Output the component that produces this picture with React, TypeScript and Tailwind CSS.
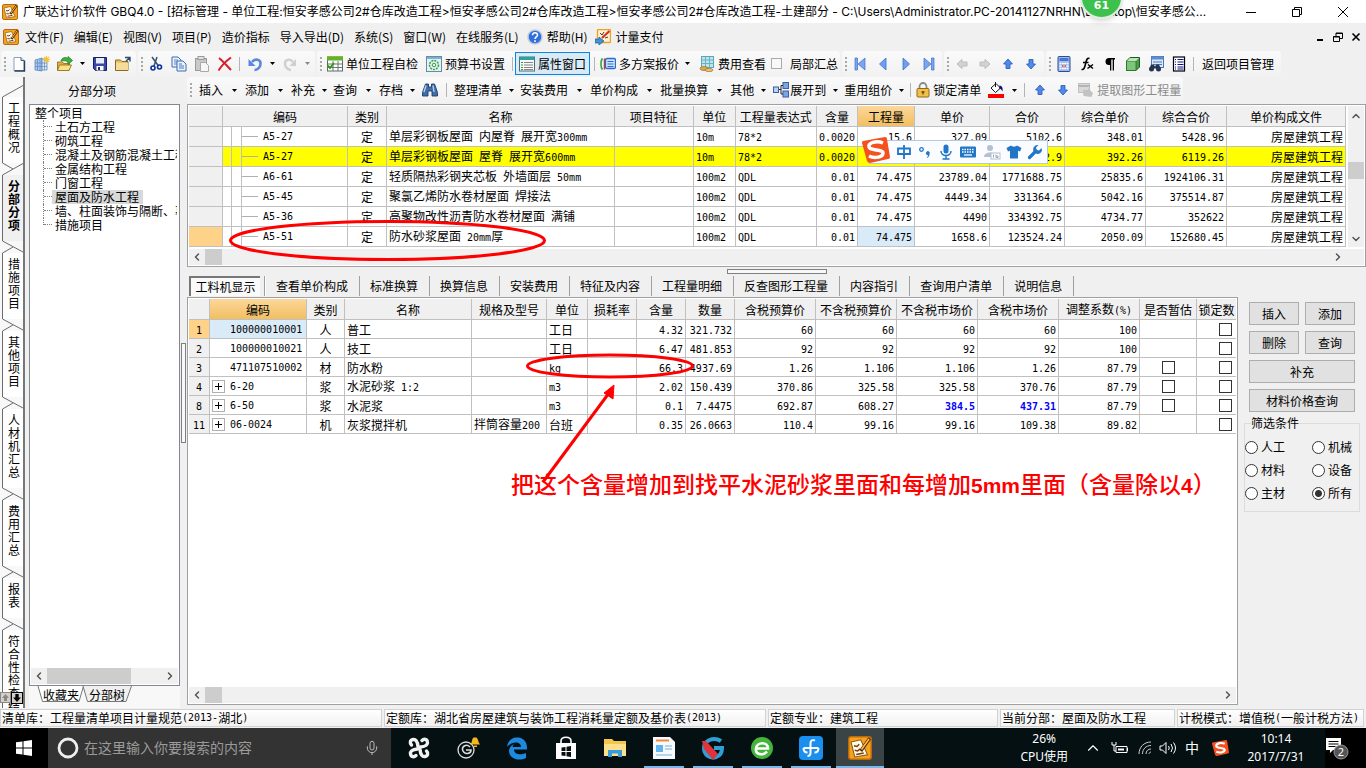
import type { ReactNode } from 'react'
import { Mic, ChevronUp, ChevronDown, ChevronLeft, ChevronRight } from 'lucide-react'

const app = (
  <>
    <rect x="0.5" y="0.5" width="15" height="15" rx="1.5" fill="#f6a21a" stroke="#b96a0c" />
    <path d="M2 4 8.500 2.500 13 12.500 4.500 14Z" fill="#fffbe8" stroke="#8a5a1a" strokeWidth="0.7" />
    <path d="M4 6.500l2 .5 1.500-1.500M4.500 9.500l2 .5 1.500-1.500M5.500 12.300l5-1" stroke="#7a3c10" strokeWidth="1" fill="none" />
    <path d="M14.500 1.500 8.500 10" stroke="#5b2a0a" strokeWidth="2.200" />
    <path d="M14 2 9 9" stroke="#ffc14a" strokeWidth="1" />
  </>
)

const icons: Record<string, ReactNode> = {
  app,
  file: (
    <>
      <path d="M3 1.500h7l3 3v10H3Z" fill="#fff" stroke="#8ba0b8" />
      <path d="M10 1.500v3h3" fill="#cfe0f2" stroke="#44607f" />
      <path d="M13.500 4.500v10.500H3.500" stroke="#24405f" fill="none" strokeWidth="1.400" />
    </>
  ),
  newGrid: (
    <>
      <path d="M1 4 8 2v13l-7-1Z" fill="#a9c8ee" stroke="#5b86bf" strokeWidth="0.8" />
      <path d="M8 3h5v11H8Z" fill="#dbe9f9" stroke="#5b86bf" strokeWidth="0.8" />
      <path d="M3.500 4v10M6 3v12M10.500 3v11M1 7h12M1 10.500h12" stroke="#5b86bf" strokeWidth="0.7" />
      <path d="M12.500 0v7M9 3.500h7M10 1l5 5M15 1l-5 5" stroke="#f5c22e" strokeWidth="1.100" />
    </>
  ),
  open: (
    <>
      <path d="M0.500 6h5l1 1.500h6V14h-12Z" fill="#e3b13c" stroke="#8e6412" strokeWidth="0.8" />
      <path d="M2.500 9h12l-2.500 5.500H0.500Z" fill="#fbe08c" stroke="#8e6412" strokeWidth="0.8" />
      <path d="M4 5c1-4 5-4 7-2.500V0.500l4.500 4-4.500 4V6C9 4.500 6.500 4.500 4 5Z" fill="#3cb43c" stroke="#1b741b" strokeWidth="0.7" />
    </>
  ),
  save: (
    <>
      <path d="M1.500 1.500h13v13h-11l-2-2Z" fill="#3648a8" stroke="#16205c" />
      <rect x="4" y="2" width="8" height="5.500" fill="#e6ecf8" />
      <rect x="4.500" y="10" width="7" height="4.500" fill="#fff" />
      <rect x="6" y="11" width="2" height="3" fill="#222b66" />
    </>
  ),
  folder: (
    <>
      <path d="M0.500 4h5l1.500 1.500h6v9H0.500Z" fill="#e9c56a" stroke="#8b6a24" />
      <path d="M1 7h12v7H1Z" fill="#f5dc98" />
      <path d="M10 1.500h5v4M15 1.500 11 5" stroke="#2c4a74" strokeWidth="1.400" fill="none" />
    </>
  ),
  cut: (
    <>
      <path d="M4 1l6.500 9M9 1 6 10" stroke="#39536e" strokeWidth="1.500" />
      <circle cx="5" cy="12" r="2" fill="none" stroke="#0c2f9c" strokeWidth="1.600" />
      <circle cx="11.500" cy="11" r="2" fill="none" stroke="#0c2f9c" strokeWidth="1.600" />
    </>
  ),
  copy: (
    <>
      <path d="M1 1h6l3 3v7H1Z" fill="#e8f1fc" stroke="#3c6cb4" />
      <path d="M3 4h4M3 6h5M3 8h5" stroke="#3c6cb4" strokeWidth="0.8" />
      <path d="M6 5h6l3 3v7H6Z" fill="#e8f1fc" stroke="#3c6cb4" />
      <path d="M8 8h3M8 10h5M8 12h5" stroke="#3c6cb4" strokeWidth="0.9" />
    </>
  ),
  paste: (
    <>
      <rect x="1.500" y="2.500" width="11" height="12" fill="#c9c9c9" stroke="#9a9a9a" />
      <rect x="4" y="0.500" width="6" height="3" fill="#e2e2e2" stroke="#9a9a9a" />
      <path d="M6.500 6.500h5l3 3v6h-8Z" fill="#f6f6f6" stroke="#a8a8a8" />
    </>
  ),
  del: <path d="M2 2c4 3 8 8 12 12M14 1.500C9 5 5 9 1.500 14.500" stroke="#d3202b" strokeWidth="2" fill="none" />,
  undo: (
    <>
      <path d="M5 6C8 2 14 3.500 13.500 8c0 4-4 6-6 6" stroke="#5a88de" strokeWidth="2.600" fill="none" />
      <path d="M1.500 3v7h7Z" fill="#5a88de" />
    </>
  ),
  redo: (
    <>
      <path d="M11 6C8 2 2.500 3.500 3 8c0 4 4 6 6 6" stroke="#cfcfcf" strokeWidth="2.400" fill="none" />
      <path d="M14 3v7H7.500Z" fill="#cfcfcf" />
    </>
  ),
  check: (
    <>
      <rect x="0.500" y="1" width="15" height="14" fill="#fff" stroke="#5c6a6a" />
      <rect x="0" y="0.500" width="16" height="4" fill="#62b51e" />
      <path d="M0 8h16M0 11.500h16M6 5v10M11 5v10" stroke="#5c6a6a" strokeWidth="0.9" />
      <path d="M1 9.500l2 2.500 4-5" stroke="#2f9a12" strokeWidth="2" fill="none" />
    </>
  ),
  setting: (
    <>
      <rect x="0.500" y="0.500" width="15" height="15" fill="#e4f3ee" stroke="#5f8fa8" />
      <rect x="1" y="1" width="14" height="2" fill="#7fb2d2" />
      <circle cx="8" cy="9" r="4.500" fill="none" stroke="#3d9a54" strokeWidth="1.500" strokeDasharray="2 1" />
      <circle cx="8" cy="9" r="1.800" fill="none" stroke="#3d9a54" />
    </>
  ),
  props: (
    <>
      <rect x="0.500" y="1" width="15" height="14" fill="#f8f8f8" stroke="#4b6e7a" />
      <rect x="0.500" y="1" width="15" height="3" fill="#2ba4a0" />
      <path d="M5 6.500h9M5 9h9M5 11.500h9M5 13.500h9" stroke="#777" strokeWidth="0.9" />
      <path d="M2 6.500h2M2 9h2M2 11.500h2M2 13.500h2" stroke="#2e9a48" />
    </>
  ),
  plans: (
    <>
      <path d="M2.500 2.500C0.500 4 0.500 12 2.500 13.500" stroke="#2faa3c" strokeWidth="1.600" fill="none" />
      <path d="M4.500 2.500v11" stroke="#d8352a" strokeWidth="1.500" />
      <rect x="5.500" y="2.500" width="10" height="10" rx="1.500" fill="#cfe3fb" stroke="#2a6bd2" strokeWidth="1.300" />
      <path d="M7.500 5.500h6M7.500 8h6M7.500 10.500h6" stroke="#2a6bd2" />
    </>
  ),
  cost: (
    <>
      <rect x="2.500" y="0.500" width="12" height="11" fill="#bfe3ea" stroke="#58a8bb" />
      <path d="M2.500 4h12M2.500 7.500h12M6.500 1v10M10.500 1v10" stroke="#58a8bb" strokeWidth="0.8" />
      <ellipse cx="5" cy="12.500" rx="4" ry="2" fill="#d9aa55" stroke="#9b7226" strokeWidth="0.7" />
      <ellipse cx="10" cy="14" rx="4" ry="1.600" fill="#e8c175" stroke="#9b7226" strokeWidth="0.7" />
    </>
  ),
  first: <path d="M3 2h2.500v12H3ZM13 2v12L6 8Z" fill="#7aa5f0" stroke="#3f6fd0" strokeWidth="0.7" />,
  prev: <path d="M11 2v12L4.500 8Z" fill="#6f9df0" stroke="#3f6fd0" strokeWidth="0.8" />,
  next: <path d="M5 2v12l6.500-6Z" fill="#6f9df0" stroke="#3f6fd0" strokeWidth="0.8" />,
  last: <path d="M10.500 2H13v12h-2.500ZM3 2v12l7-6Z" fill="#7aa5f0" stroke="#3f6fd0" strokeWidth="0.7" />,
  left: <path d="M3 8 8 3.500V6h5v4H8v2.500Z" fill="#d2d2d2" stroke="#bcbcbc" />,
  right: <path d="M13 8 8 3.500V6H3v4h5v2.500Z" fill="#d2d2d2" stroke="#bcbcbc" />,
  up: <path d="M8 3 12.500 8H10v4.500H6V8H3.500Z" fill="#4f8bea" stroke="#2456b8" strokeWidth="0.8" />,
  down: <path d="M8 13 12.500 8H10V3.500H6V8H3.500Z" fill="#4f8bea" stroke="#2456b8" strokeWidth="0.8" />,
  calc: (
    <>
      <rect x="2" y="0.500" width="12" height="15" rx="1" fill="#9dbcec" stroke="#2b4d94" />
      <rect x="3.500" y="2" width="9" height="3" fill="#4a78c8" />
      <path d="M3.500 7.500h9M3.500 10h9M3.500 12.500h9" stroke="#fff" strokeWidth="1.600" strokeDasharray="1.800 0.600" />
      <path d="M6 10h4" stroke="#d8352a" strokeWidth="1.500" strokeDasharray="1.500 1" />
    </>
  ),
  fx: (
    <>
      <path d="M10.500 2.500C8 1.500 7.500 4 6.500 8s-1.500 6-4 5.500M4 6.500h5.500" stroke="#000" strokeWidth="1.600" fill="none" />
      <path d="M9 8.500l5 4M14 8.500l-5.500 4" stroke="#000" strokeWidth="1.500" />
    </>
  ),
  para: <path d="M13 2H7a3.500 3.500 0 0 0 0 7h1v5.500h1.300V3.500h1.400v11H12V3.500h1Z" fill="#000" />,
  cube: (
    <>
      <path d="M1.500 5 5 1.500h9.500V11L11 14.500H1.500Z" fill="#4a9a4a" stroke="#1e5a22" />
      <path d="M1.500 5H11v9.500H1.500Z" fill="#7cc67c" stroke="#2b6e2f" strokeWidth="0.8" />
      <path d="M2 5 5 2h9l-3 3Z" fill="#b8e6b4" />
    </>
  ),
  findSheet: (
    <>
      <rect x="3.500" y="0.500" width="12" height="11" fill="#dbe8f8" stroke="#4c78b8" />
      <rect x="3.500" y="0.500" width="12" height="3" fill="#5b8cd4" />
      <path d="M5 6h9M5 8.500h9" stroke="#4c78b8" />
      <circle cx="3.500" cy="13" r="2.500" fill="#26354c" />
      <circle cx="10.500" cy="13" r="2.500" fill="#26354c" />
      <path d="M3 8.500h2.500l1.500 2 1.500-2H11l1.500 4H1.500Z" fill="#26354c" />
    </>
  ),
  list: (
    <>
      <rect x="2.500" y="1" width="11" height="14" fill="#fff" stroke="#000" strokeWidth="1.200" />
      <path d="M4 3.500h1M4 6h1M4 8.500h1M4 11h1M4 13h1M6.500 3.500h6M6.500 6h6M6.500 8.500h6M6.500 11h6M6.500 13h6" stroke="#10108a" strokeWidth="1.200" />
    </>
  ),
  binoculars: (
    <>
      <path d="M3.500 2h3v3h3V2h3l3 8.500v3.500h-5.500V9h-4v5H0.500v-3.500Z" fill="#3f6ea8" stroke="#1e3c68" strokeWidth="0.9" />
      <path d="M4 3.500 2 10M11 3.500l1 6.500" stroke="#b4d0f0" strokeWidth="1.400" />
    </>
  ),
  expand: (
    <>
      <rect x="0.500" y="5" width="5" height="5.500" fill="#b9d3f5" stroke="#3b5fa0" />
      <rect x="10" y="0.500" width="5.500" height="6" fill="#7aa5e6" stroke="#3b5fa0" />
      <rect x="10" y="9" width="5.500" height="6" fill="#7aa5e6" stroke="#3b5fa0" />
      <path d="M6 7.500h2M10 3.500H8V12h2" stroke="#222" fill="none" />
    </>
  ),
  lock: (
    <>
      <path d="M4.500 7V4.500a3.500 3.500 0 0 1 7 0V7" stroke="#8b8b8b" strokeWidth="1.800" fill="none" />
      <rect x="2" y="6.500" width="12" height="8.500" rx="1" fill="#efc04a" stroke="#94691a" />
      <path d="M8 9v3.500M6.500 10h3" stroke="#6d4a0c" strokeWidth="1.300" />
    </>
  ),
  bucket: (
    <>
      <path d="M3 6 8 1.500 12.500 6 7.500 10.500Z" fill="#fff" stroke="#111" />
      <path d="M7.500 0v5" stroke="#111" />
      <path d="M11.500 3.500c3 .5 3.500 3 3 6-1-2-2-3-3.500-3Z" fill="#10107a" />
      <rect x="0" y="12" width="16" height="4" fill="#f00" />
    </>
  ),
  extract: (
    <>
      <rect x="0.500" y="1.500" width="11" height="9" fill="#d9d9d9" stroke="#c0c0c0" />
      <path d="M0.500 4h11" stroke="#b4b4b4" strokeWidth="2" />
      <path d="M5 8h5V6l5 5-1.500 4-8-1Z" fill="#c2c2c2" />
    </>
  ),
  help: (
    <>
      <circle cx="8" cy="8" r="7" fill="#2f6fe0" stroke="#c2cbd8" strokeWidth="1.500" />
      <path d="M5.500 6.200c0-3.400 5.200-3 5 0C10.400 7.800 8 8 8 10M8 11.300V13" stroke="#fff" strokeWidth="1.600" fill="none" />
    </>
  ),
  pay: (
    <>
      <rect x="2.500" y="0.500" width="13" height="13" rx="1" fill="#fdf3d8" stroke="#f0a020" strokeWidth="1.400" />
      <path d="M5 4l2 2 2-3M10 9l3-1" stroke="#5c3010" fill="none" />
      <path d="M14.500 2 7 9" stroke="#d83020" strokeWidth="2.200" />
      <path d="M0 10h4V8l5 4-5 4v-2H0Z" fill="#3a96d8" stroke="#1a5a94" strokeWidth="0.7" />
    </>
  ),
}

function Icon({ name, cell = 'w-[23px]' }: { name: string; cell?: string }) {
  return (
    <span className={`${cell} flex shrink-0 justify-center`}>
      <svg viewBox="0 0 16 16" className="size-4 shrink-0">{icons[name]}</svg>
    </span>
  )
}

const Grip = () => (
  <span className="mr-px ml-[3px] h-[14px] w-[2px] shrink-0 bg-[repeating-linear-gradient(#a8a8a8_0_2px,transparent_2px_4px)]" />
)
const Sep = ({ className = 'mx-[3px]' }: { className?: string }) => (
  <span className={`${className} h-[14px] w-px shrink-0 bg-[#b4b4b4]`} />
)
const Caret = ({ w = 'w-3', dim = false }: { w?: string; dim?: boolean }) => (
  <span className={`${w} flex shrink-0 justify-center`}>
    <svg viewBox="0 0 5 3" className="h-[3px] w-[5px]">
      <path d="M0 0h5L2.500 3Z" fill={dim ? '#888' : '#000'} />
    </svg>
  </span>
)
const Group = ({ children }: { children: ReactNode }) => (
  <div className="mr-[2px] flex h-[26px] items-center rounded-[3px] bg-linear-to-b from-[#fafafa] to-[#f1f1f1] pr-[2px]">{children}</div>
)
const IconBtn = ({ name, label, cell }: { name: string; label: string; cell?: string }) => (
  <button aria-label={label} className="flex shrink-0"><Icon name={name} cell={cell} /></button>
)

// latin runs are set in the narrow monospace, the rest in the CJK face
function Mix({ text }: { text: string }) {
  return (
    <>
      {text.split(/([\x20-\x7e]+)/).map((part, i) =>
        i % 2 ? <span key={i} className="font-['DejaVu_Sans_Mono',monospace] text-[10px]">{part}</span> : part
      )}
    </>
  )
}

const menus = ['文件(F)', '编辑(E)', '视图(V)', '项目(P)', '造价指标', '导入导出(D)', '系统(S)', '窗口(W)', '在线服务(L)']

function TitleBar() {
  return (
    <header className="relative flex h-[23px] shrink-0 items-center bg-white pl-[2px]">
      <Icon name="app" cell="w-4" />
      <h1 className="ml-[5px] flex-1 truncate font-['Inter','Noto_Sans_CJK_SC',sans-serif] text-xs">
        广联达计价软件 GBQ4.0 - [招标管理 - 单位工程:恒安孝感公司2#仓库改造工程&gt;恒安孝感公司2#仓库改造工程&gt;恒安孝感公司2#仓库改造工程-土建部分 - C:\Users\Administrator.PC-20141127NRHN\Desktop\恒安孝感公...
      </h1>
      <div className="flex w-[138px] shrink-0">
        <button aria-label="最小化" className="flex flex-1 justify-center">
          <svg viewBox="0 0 12 12" className="size-3"><path d="M1 6.500h10" stroke="#000" /></svg>
        </button>
        <button aria-label="还原" className="flex flex-1 justify-center">
          <svg viewBox="0 0 12 12" className="size-3"><path d="M1.500 3.500h7v7h-7ZM3.500 3.500v-2h7v7h-2" fill="none" stroke="#000" /></svg>
        </button>
        <button aria-label="关闭" className="flex flex-1 justify-center">
          <svg viewBox="0 0 12 12" className="size-3"><path d="M1 1l10 10M11 1 1 11" stroke="#000" /></svg>
        </button>
      </div>
      <div className="absolute -top-[24px] right-[243px] z-20 flex size-[43px] items-end justify-center rounded-full border-2 border-[#dfeede] bg-[#3cc14e] pb-[3px] font-['DejaVu_Sans',sans-serif] text-[11px] font-bold text-white shadow-md">61</div>
    </header>
  )
}

function MenuBar() {
  return (
    <nav className="flex h-[27px] shrink-0 items-center pl-[3px]">
      <Icon name="app" cell="w-4" />
      <div className="ml-[6px] flex gap-[10px]">
        {menus.map((m) => <button key={m}>{m}</button>)}
      </div>
      <button className="ml-[8px] flex items-center gap-[4px]"><Icon name="help" cell="w-4" />帮助(H)</button>
      <button className="ml-[8px] flex items-center gap-[4px]"><Icon name="pay" cell="w-4" />计量支付</button>
      <div className="mr-[5px] ml-auto flex items-center gap-[8px]">
        <button aria-label="最小化子窗口"><svg viewBox="0 0 10 10" className="size-[10px]"><path d="M2 8h6" stroke="#000" strokeWidth="2" /></svg></button>
        <button aria-label="还原子窗口"><svg viewBox="0 0 10 10" className="size-[10px]"><path d="M0.500 4.500h6v5h-6ZM0.500 5h6M3 4V1h6.500v5.500H7M3 1.500h6" fill="none" stroke="#000" /></svg></button>
        <button aria-label="关闭子窗口"><svg viewBox="0 0 10 10" className="size-[10px]"><path d="M1.500 1.500l7 7M8.500 1.500l-7 7" stroke="#000" strokeWidth="1.600" /></svg></button>
      </div>
    </nav>
  )
}

function MainToolbar() {
  return (
    <div className="flex h-[27px] shrink-0 items-center overflow-hidden pl-px whitespace-nowrap">
      <Group>
        <Grip />
        <IconBtn name="file" label="新建" />
        <IconBtn name="newGrid" label="新建单位工程" />
        <IconBtn name="open" label="打开" />
        <Caret />
        <IconBtn name="save" label="保存" />
        <IconBtn name="folder" label="另存" />
      </Group>
      <Group>
        <Grip />
        <IconBtn name="cut" label="剪切" />
        <IconBtn name="copy" label="复制" />
        <IconBtn name="paste" label="粘贴" />
        <IconBtn name="del" label="删除" />
        <Sep />
        <IconBtn name="undo" label="撤销" />
        <Caret />
        <IconBtn name="redo" label="恢复" />
        <Caret dim />
      </Group>
      <Group>
        <Grip />
        <button className="flex items-center"><Icon name="check" />单位工程自检</button>
        <button className="ml-[4px] flex items-center"><Icon name="setting" />预算书设置</button>
        <Sep className="mr-[2px] ml-[7px]" />
        <button className="flex h-[23px] w-[75px] items-center border border-[#0a84e0] bg-[#d9eaf7]"><Icon name="props" cell="w-[22px]" />属性窗口</button>
        <Sep className="mr-px ml-[4px]" />
        <button className="flex items-center"><Icon name="plans" />多方案报价</button>
        <Caret w="w-4" />
        <button className="flex items-center"><Icon name="cost" />费用查看</button>
        <label className="ml-[5px] flex items-center gap-[8px]">
          <input type="checkbox" className="size-[11px] appearance-none border border-[#aaa] bg-[#f8f8f8]" />
          局部汇总
        </label>
      </Group>
      <Group>
        <Grip />
        <IconBtn name="first" label="首条" />
        <IconBtn name="prev" label="上一条" />
        <IconBtn name="next" label="下一条" />
        <IconBtn name="last" label="末条" />
      </Group>
      <Group>
        <Grip />
        <IconBtn name="left" label="升级" />
        <IconBtn name="right" label="降级" />
        <IconBtn name="up" label="上移" />
        <IconBtn name="down" label="下移" />
      </Group>
      <Group>
        <Grip />
        <IconBtn name="calc" label="计算器" />
        <IconBtn name="fx" label="函数" />
        <IconBtn name="para" label="段落" />
        <IconBtn name="cube" label="图元" />
        <IconBtn name="findSheet" label="查找表" />
        <IconBtn name="list" label="列表" />
        <Sep />
        <button className="px-[5px]">返回项目管理</button>
      </Group>
    </div>
  )
}

const Drop = ({ text, tight = false }: { text: string; tight?: boolean }) => (
  <button className="flex items-center">{text}<Caret w={tight ? 'w-[18px]' : 'w-[22px]'} /></button>
)

function EditToolbar() {
  return (
    <div className="flex h-[26px] shrink-0 items-center overflow-hidden whitespace-nowrap">
      <Group>
        <Grip />
        <span className="w-[6px]" />
        <Drop text="插入" />
        <Drop text="添加" />
        <Drop text="补充" tight />
        <Drop text="查询" />
        <Drop text="存档" tight />
        <IconBtn name="binoculars" label="查找" cell="w-[18px]" />
        <Sep className="mr-[7px] ml-[7px]" />
        <Drop text="整理清单" tight />
        <Drop text="安装费用" />
        <Drop text="单价构成" />
        <Drop text="批量换算" />
        <Drop text="其他" tight />
        <Icon name="expand" cell="w-[18px]" />
        <Drop text="展开到" tight />
        <Drop text="重用组价" tight />
        <Sep className="mr-[2px]" />
        <button className="flex items-center"><Icon name="lock" cell="w-[20px]" />锁定清单</button>
        <button aria-label="填充颜色" className="ml-[3px] flex items-center"><Icon name="bucket" /><Caret w="w-[14px]" /></button>
        <Sep />
        <IconBtn name="up" label="向上" />
        <IconBtn name="down" label="向下" />
        <button className="flex items-center text-[#8a8a8a]"><Icon name="extract" />提取图形工程量</button>
      </Group>
    </div>
  )
}

const sideTabs = ['工程概况', '分部分项', '措施项目', '其他项目', '人材机汇总', '费用汇总', '报表', '符合性检查结果']

function SideTabs() {
  return (
    <aside className="relative flex w-[25px] shrink-0 flex-col overflow-hidden border-r-2 border-[#777] bg-[#f8f8f8] pt-[8px]">
      {sideTabs.map((t, i) => (
        <div key={t} className="shrink-0">
          <svg viewBox="0 0 23 12" className="block h-3 w-[23px]">
            <path
              d={i === 0 ? 'M23 0.500 2.500 12' : i === 1 ? 'M2.500 0 13 6M23 0.500 2.500 12' : 'M2.500 0 23 11M13 6 2.500 12'}
              stroke="#6b6b6b"
              fill="none"
            />
          </svg>
          <button className={`ml-[2px] block w-[21px] border-l border-[#6b6b6b] pt-[4px] pb-[10px] pl-[5px] ${i === 1 ? 'bg-[#f0f0f0] font-bold' : 'bg-white'}`}>
            <span className="block w-3 leading-[13px] break-all">{t}</span>
          </button>
        </div>
      ))}
      <div className="absolute bottom-[4px] left-0 flex">
        <button aria-label="向上滚动" className="size-[11px] border border-[#888] bg-[#d4d0c8]"><svg viewBox="0 0 9 9"><path d="M4.500 1 8 5H6v3H3V5H1Z" fill="#888" /></svg></button>
        <button aria-label="向下滚动" className="size-[12px] border border-black bg-[#d4d0c8]"><svg viewBox="0 0 9 9"><path d="M4.500 8 8 4H6V1H3v3H1Z" fill="#000" /></svg></button>
      </div>
    </aside>
  )
}

const treeItems = ['土石方工程', '砌筑工程', '混凝土及钢筋混凝土工程', '金属结构工程', '门窗工程', '屋面及防水工程', '墙、柱面装饰与隔断、幕墙', '措施项目']

function HScroll({ thumb, right = '' }: { thumb: string; right?: string }) {
  return (
    <div className={`flex h-4 shrink-0 items-center bg-[#f0f0f0] text-[#555] ${right}`}>
      <ChevronLeft className="mx-[2px] size-3" strokeWidth={3} />
      <span className={`h-full bg-[#cdcdcd] ${thumb}`} />
      <ChevronRight className="mr-[2px] ml-auto size-3" strokeWidth={3} />
    </div>
  )
}

function TreePanel() {
  return (
    <section className="ml-[4px] flex w-[151px] shrink-0 flex-col">
      <h2 className="flex h-[27px] shrink-0 items-center pl-[39px]">分部分项</h2>
      <div className="flex flex-1 flex-col border border-[#828790] bg-white">
        <div className="mr-[2px] flex-1 overflow-hidden pt-px pl-[5px] leading-[14px]">
          <div>整个项目</div>
          <ul className="ml-[8px]">
            {treeItems.map((t, i) => (
              <li key={t} className="flex whitespace-nowrap">
                <span className={`w-px border-l border-dotted border-[#808080] ${i === treeItems.length - 1 ? 'h-[7px]' : 'h-[14px]'}`} />
                <span className="h-[7px] w-[8px] shrink-0 border-b border-dotted border-[#808080]" />
                <button className={`pr-[4px] pl-[3px] text-left ${i === 5 ? 'bg-[#d9d9d9]' : ''}`}>{t}</button>
              </li>
            ))}
          </ul>
        </div>
        <div className="m-px"><HScroll thumb="w-[84px]" /></div>
      </div>
      <div className="relative flex h-[22px] shrink-0 items-start bg-[#f8f8f8] pl-[14px]">
        <svg viewBox="0 0 110 17" className="absolute top-0 left-[8px] h-[17px] w-[110px]">
          <path d="M1 0 5.500 15.500H42L46.500 0" fill="#fff" stroke="#777" />
          <path d="M46 0 50.500 15.500H89L94.500 0" fill="#f0f0f0" stroke="#777" />
        </svg>
        <button className="relative mr-[10px] leading-[17px]">收藏夹</button>
        <button className="relative leading-[17px]">分部树</button>
      </div>
    </section>
  )
}

const billCols: [string, string][] = [
  ['', 'w-[34px]'], ['编码', 'w-[125px]'], ['类别', 'w-[39px]'], ['名称', ''], ['项目特征', 'w-[79px]'], ['单位', 'w-[42px]'],
  ['工程量表达式', 'w-[81px]'], ['含量', 'w-[41px]'], ['工程量', 'w-[57px]'], ['单价', 'w-[75px]'], ['合价', 'w-[75px]'],
  ['综合单价', 'w-[81px]'], ['综合合价', 'w-[81px]'], ['单价构成文件', 'w-[119px]'],
]
const billRows = [
  ['A5-27', '定', '单层彩钢板屋面 内屋脊 展开宽300mm', '', '10m', '78*2', '0.0020', '15.6', '327.09', '5102.6', '348.01', '5428.96', '房屋建筑工程'],
  ['A5-27', '定', '单层彩钢板屋面 屋脊 展开宽600mm', '', '10m', '78*2', '0.0020', '15.6', '368.78', '5752.9', '392.26', '6119.26', '房屋建筑工程'],
  ['A6-61', '定', '轻质隔热彩钢夹芯板 外墙面层 50mm', '', '100m2', 'QDL', '0.01', '74.475', '23789.04', '1771688.75', '25835.6', '1924106.31', '房屋建筑工程'],
  ['A5-45', '定', '聚氯乙烯防水卷材屋面 焊接法', '', '100m2', 'QDL', '0.01', '74.475', '4449.34', '331364.6', '5042.16', '375514.87', '房屋建筑工程'],
  ['A5-36', '定', '高聚物改性沥青防水卷材屋面 满铺', '', '100m2', 'QDL', '0.01', '74.475', '4490', '334392.75', '4734.77', '352622', '房屋建筑工程'],
  ['A5-51', '定', '防水砂浆屋面 20mm厚', '', '100m2', 'QDL', '0.01', '74.475', '1658.6', '123524.24', '2050.09', '152680.45', '房屋建筑工程'],
]

const thBase = 'h-[21px] overflow-hidden border-r border-b border-[#c0c0c0] p-0 text-center font-normal'
const tdBase = 'overflow-hidden border-r border-b border-[#c0c0c0] py-0'

function BillGrid() {
  return (
    <div className="relative flex shrink-0 flex-col border border-[#a0a0a0] bg-white p-px">
      <div className="flex">
        <table className="flex-1 table-fixed border-separate border-spacing-0 leading-[15px] whitespace-nowrap">
          <colgroup>{billCols.map(([n, w]) => <col key={n} className={w} />)}</colgroup>
          <thead>
            <tr>
              {billCols.map(([n]) => (
                <th key={n} className={`${thBase} ${n === '工程量' ? 'bg-linear-to-b from-[#fbd79a] to-[#f2bf60]' : 'bg-[#f0f0f0]'}`}>{n}</th>
              ))}
            </tr>
          </thead>
          <tbody>
            {billRows.map((r, i) => (
              <tr key={i} className={`h-5 ${i === 1 ? 'bg-[#ffff00]' : ''}`}>
                <td className={`${tdBase} ${i === 5 ? 'bg-[#ffd28a]' : 'bg-[#f0f0f0]'}`} />
                {r.map((c, j) =>
                  j === 0 ? (
                    <td key={j} className={`${tdBase} px-0`}>
                      <div className="flex h-[19px] items-center">
                        <span className="h-full w-[9px] border-r border-[#c0c0c0]" />
                        <span className="h-full w-[10px] border-r border-[#c0c0c0]" />
                        <span className="mr-[5px] h-px w-4 bg-[#b0b0b0]" />
                        <Mix text={c} />
                      </div>
                    </td>
                  ) : (
                    <td
                      key={j}
                      className={`${tdBase} px-[2px] ${j === 1 ? 'text-center' : j >= 6 ? 'text-right' : ''} ${i === 5 && j === 7 ? 'bg-[#d9eaf9]' : ''}`}
                    >
                      <Mix text={c} />
                    </td>
                  )
                )}
              </tr>
            ))}
          </tbody>
        </table>
        <div className="ml-[2px] flex w-4 shrink-0 flex-col items-center bg-[#f0f0f0] text-[#555]">
          <ChevronUp className="mt-[4px] size-3" strokeWidth={3} />
          <span className="mt-10 h-[17px] w-full bg-[#cdcdcd]" />
          <ChevronDown className="mt-auto mb-[2px] size-3" strokeWidth={3} />
        </div>
      </div>
      <div className="mt-[2px]"><HScroll thumb="w-[17px]" right="pr-[18px]" /></div>
      <ImeBar />
    </div>
  )
}

const SogouS = ({ className }: { className: string }) => (
  <svg viewBox="0 0 28 26" className={className}>
    <path d="M1 4 23 0q2 0 2 2l3 18q0 2-2 2L8 26q-2 0-3-2L0 6q0-2 1-2Z" fill="#f4511e" />
    <path d="M21 6C14 3 6 6 7 10s14 2 14 6-8 6-14 3" stroke="#fff" strokeWidth="3.500" fill="none" />
  </svg>
)

function ImeBar() {
  return (
    <div className="absolute top-[35px] right-[317px] z-20 flex h-[24px] w-[179px] items-center justify-between border border-[#b3c9e2] bg-[#fafcff] pr-[4px] pl-[26px] text-[#2176c7]">
      <SogouS className="absolute -top-[4px] -left-[8px] h-[26px] w-[28px]" />
      <svg viewBox="0 0 16 16" className="size-4"><path d="M2 4.500h12v5.500H2ZM8 1v14" fill="none" stroke="currentColor" strokeWidth="1.800" /></svg>
      <svg viewBox="0 0 16 16" className="size-4"><circle cx="4.500" cy="5.500" r="1.800" fill="none" stroke="currentColor" strokeWidth="1.300" /><path d="M9.500 8a1.800 1.800 0 1 1 3 2c0 2-1 3.500-3 4 1-1 1.400-2 1.400-3A1.700 1.700 0 0 1 9.500 8Z" fill="currentColor" /></svg>
      <svg viewBox="0 0 16 16" className="size-4"><rect x="5.500" y="0.500" width="5" height="9" rx="2.500" fill="currentColor" /><path d="M3 7c0 6 10 6 10 0M8 11.500V15M4.500 15h7" fill="none" stroke="currentColor" strokeWidth="1.500" /></svg>
      <svg viewBox="0 0 18 16" className="h-4 w-[18px]"><rect x="1" y="2.500" width="16" height="11" rx="1" fill="currentColor" /><path d="M3 5.500h12M3 8h12" stroke="#fff" strokeWidth="1.300" strokeDasharray="1.500 1" /><path d="M5 11h8" stroke="#fff" strokeWidth="1.300" /></svg>
      <svg viewBox="0 0 18 16" className="h-4 w-[18px]"><circle cx="7" cy="4" r="3" fill="#b4bfd2" /><path d="M1 13c0-6 12-6 12 0Z" fill="#b4bfd2" /><rect x="8" y="9" width="9" height="6" fill="#fff" stroke="#b4bfd2" /><path d="M10.500 10.500v3M13 10.500v3h2v-1.500h-2" stroke="#9aa8c0" fill="none" /></svg>
      <svg viewBox="0 0 16 16" className="size-4"><path d="M5 1.500c1 1.500 5 1.500 6 0L15.500 4 14 7.500l-2-.8V14.500H4V6.700l-2 .8L0.500 4Z" fill="currentColor" /></svg>
      <svg viewBox="0 0 16 16" className="size-4"><path d="M2.500 13.500 9 7" stroke="currentColor" strokeWidth="3.200" strokeLinecap="round" /><path d="M14.500 4 12 6.500 9.500 6 9 3.500 11.500 1A4.500 4.500 0 1 0 15 6.500Z" fill="currentColor" /></svg>
    </div>
  )
}

const detailTabs = ['查看单价构成', '标准换算', '换算信息', '安装费用', '特征及内容', '工程量明细', '反查图形工程量', '内容指引', '查询用户清单', '说明信息']

const resCols: [string, string][] = [
  ['', 'w-[21px]'], ['编码', 'w-[97px]'], ['类别', 'w-[38px]'], ['名称', ''], ['规格及型号', 'w-[75px]'], ['单位', 'w-[41px]'],
  ['损耗率', 'w-[49px]'], ['含量', 'w-[49px]'], ['数量', 'w-[49px]'], ['含税预算价', 'w-[81px]'], ['不含税预算价', 'w-[81px]'],
  ['不含税市场价', 'w-[81px]'], ['含税市场价', 'w-[81px]'], ['调整系数(%)', 'w-[81px]'], ['是否暂估', 'w-[57px]'], ['锁定数', 'w-[39px]'],
]
const resRows = [
  { no: '1', code: '100000010001', cells: ['人', '普工', '', '工日', '', '4.32', '321.732', '60', '60', '60', '60', '100'] },
  { no: '2', code: '100000010021', cells: ['人', '技工', '', '工日', '', '6.47', '481.853', '92', '92', '92', '92', '100'] },
  { no: '3', code: '471107510002', est: true, cells: ['材', '防水粉', '', 'kg', '', '66.3', '4937.69', '1.26', '1.106', '1.106', '1.26', '87.79'] },
  { no: '4', code: '6-20', open: true, est: true, cells: ['浆', '水泥砂浆 1:2', '', 'm3', '', '2.02', '150.439', '370.86', '325.58', '325.58', '370.76', '87.79'] },
  { no: '8', code: '6-50', open: true, est: true, edited: true, cells: ['浆', '水泥浆', '', 'm3', '', '0.1', '7.4475', '692.87', '608.27', '384.5', '437.31', '87.79'] },
  { no: '11', code: '06-0024', open: true, cells: ['机', '灰浆搅拌机', '拌筒容量200', '台班', '', '0.35', '26.0663', '110.4', '99.16', '99.16', '109.38', '89.82'] },
]

const box = 'block size-[13px] appearance-none border border-[#333] bg-white'

function ResourceGrid() {
  return (
    <div className="relative flex min-w-0 flex-1 flex-col border border-[#a0a0a0] bg-white p-px">
      <table className="w-full table-fixed border-separate border-spacing-0 leading-[15px] whitespace-nowrap">
        <colgroup>{resCols.map(([n, w]) => <col key={n} className={w} />)}</colgroup>
        <thead>
          <tr>
            {resCols.map(([n], i) => (
              <th key={n} className={`${thBase} ${i === 15 ? 'border-r-0' : ''} ${n === '编码' ? 'bg-linear-to-b from-[#fbd79a] to-[#f2bf60]' : 'bg-[#f0f0f0]'}`}><Mix text={n} /></th>
            ))}
          </tr>
        </thead>
        <tbody>
          {resRows.map((r, i) => (
            <tr key={r.no} className="h-[19px]">
              <td className={`${tdBase} px-0 text-center ${i === 0 ? 'bg-[#ffd28a]' : 'bg-[#f0f0f0]'}`}><Mix text={r.no} /></td>
              <td className={`${tdBase} px-0 ${i === 0 ? 'bg-[#d9eaf9]' : ''}`}>
                <div className="flex h-[18px] items-center">
                  <span className="w-5 shrink-0 pl-[2px]">
                    {r.open && (
                      <button aria-label={`展开 ${r.code}`} className="flex size-[13px] items-center justify-center border border-[#b0b0b0] bg-white">
                        <svg viewBox="0 0 7 7" className="size-[7px]"><path d="M0 3.500h7M3.500 0v7" stroke="#000" /></svg>
                      </button>
                    )}
                  </span>
                  <Mix text={r.code} />
                </div>
              </td>
              {r.cells.map((c, j) => (
                <td
                  key={j}
                  className={`${tdBase} px-[2px] ${j === 0 ? 'text-center' : j >= 5 ? 'text-right' : ''} ${r.edited && (j === 9 || j === 10) ? 'font-bold text-[#0000ff]' : ''}`}
                >
                  <Mix text={c} />
                </td>
              ))}
              <td className={`${tdBase} px-0`}>{r.est && <input type="checkbox" aria-label={`${r.code} 是否暂估`} className={`${box} mx-auto`} />}</td>
              <td className={`${tdBase} border-r-0 px-0`}><input type="checkbox" aria-label={`${r.code} 锁定数量`} className={`${box} mr-[4px] ml-auto`} /></td>
            </tr>
          ))}
        </tbody>
      </table>
      <p className="mt-9 ml-[322px] text-[23px] leading-[26px] font-medium whitespace-nowrap text-[#ff0000]">
        把这个含量增加到找平水泥砂浆里面和每增加<b className="font-['Liberation_Sans',sans-serif] text-[21px]">5mm</b>里面（含量除以<b className="font-['Liberation_Sans',sans-serif] text-[21px]">4</b>）
      </p>
      <div className="mt-auto"><HScroll thumb="w-[17px]" /></div>
    </div>
  )
}

const btn = 'h-[23px] border border-[#adadad] bg-[#e1e1e1]'
const filters = ['人工', '机械', '材料', '设备', '主材', '所有']

function SidePanel() {
  return (
    <aside className="w-[128px] shrink-0 px-[6px] pt-[5px]">
      <div className="mx-[5px] grid grid-cols-2 gap-x-[6px] gap-y-[6px]">
        <button className={btn}>插入</button>
        <button className={btn}>添加</button>
        <button className={btn}>删除</button>
        <button className={btn}>查询</button>
        <button className={`${btn} col-span-2`}>补充</button>
        <button className={`${btn} col-span-2`}>材料价格查询</button>
      </div>
      <fieldset className="mt-[2px] border border-[#dcdcdc] pb-[9px]">
        <legend className="ml-[6px] leading-[18px]">筛选条件</legend>
        <div className="grid grid-cols-[67px_1fr] gap-y-[5px] pt-[6px]">
          {filters.map((f) => (
            <label key={f} className="flex h-[18px] items-center gap-[3px]">
              <input
                type="radio"
                name="filter"
                defaultChecked={f === '所有'}
                className="size-[13px] appearance-none rounded-full border border-[#333] bg-white checked:bg-[radial-gradient(#333_0_3px,#fff_4px)]"
              />
              {f}
            </label>
          ))}
        </div>
      </fieldset>
    </aside>
  )
}

function StatusBar() {
  const cell = 'flex h-[18px] items-center border border-[#d2d2d2] bg-linear-to-b from-white to-[#f1f1f1] pl-px'
  return (
    <footer className="flex h-5 shrink-0 items-center gap-[2px] pr-[2px] whitespace-nowrap">
      <div className={`${cell} w-[382px]`}><Mix text="清单库：工程量清单项目计量规范(2013-湖北)" /></div>
      <div className={`${cell} w-[382px]`}><Mix text="定额库：湖北省房屋建筑与装饰工程消耗量定额及基价表(2013)" /></div>
      <div className={`${cell} flex-1`}>定额专业：建筑工程</div>
      <div className={`${cell} w-[175px]`}>当前分部：屋面及防水工程</div>
      <div className={`${cell} w-[187px]`}><Mix text="计税模式：增值税(一般计税方法)" /></div>
    </footer>
  )
}

const tasks: { label: string; run?: boolean; active?: boolean; art: ReactNode }[] = [
  {
    label: '四叶草',
    art: [0, 90, 180, 270].map((a) => (
      <path key={a} transform={`rotate(${a} 12 12)`} d="M11 10.500C10.500 5 8.500 3 6 3.500 3 4 2.500 7 4.500 9" fill="none" stroke="#f2f2f2" strokeWidth="3.400" strokeLinecap="round" />
    )),
  },
  {
    label: '助手',
    art: (
      <>
        <circle cx="10" cy="14" r="8" fill="none" stroke="#ddd" strokeWidth="1.300" />
        <path d="M14 11c-4-4-9 0-7 4s8 3 8-1h-5" fill="none" stroke="#ddd" strokeWidth="1.600" />
        <path d="M14 8.500h10c-2-2-1.500-5.500-3.500-7h-3C15.500 3 16.500 7 14 8.500ZM18 9.500h3V11h-3Z" fill="#f5b51c" />
      </>
    ),
  },
  {
    label: 'Edge',
    art: <path d="M2 11C3 4 8 1 13 1.500c6 .5 9.500 5 9 12H9c0 5 7 6 12 3.500V22C13 26 4 22 4 15c0-3 2-5.500 5-7-1 1-1.500 2-1.500 3H16c0-6-9-6-14 0Z" fill="#1b8ae0" />,
  },
  {
    label: '应用商店',
    art: (
      <>
        <path d="M2 7h20v16H2Z" fill="#fff" />
        <path d="M7 9V5c0-5 10-5 10 0v4" fill="none" stroke="#fff" strokeWidth="1.600" />
        <path d="M7.500 11.500l4-.6V15h-4ZM12.500 10.800l4.500-.8v5h-4.500ZM7.500 16h4v4l-4-.6ZM12.500 16H17v5l-4.500-.7Z" fill="#071011" />
      </>
    ),
  },
  {
    label: '文件资源管理器',
    art: (
      <>
        <path d="M1 3h8l2 2h12v15H1Z" fill="#f5c64c" />
        <path d="M1 8h22v12H1Z" fill="#fde08b" />
        <path d="M5 21v-7h14v7h-4v-3.500H9V21Z" fill="#3a9bdc" />
      </>
    ),
  },
  {
    label: '文档',
    run: true,
    art: (
      <>
        <path d="M1 1h17l5 5v17H1Z" fill="#f7f9fb" />
        <path d="M4 4.500h13" stroke="#f08a3c" strokeWidth="2" />
        <rect x="4" y="9" width="7" height="7" fill="#62b4ee" />
        <path d="M13 10h7M13 13h7M4 19h16" stroke="#9dc9ea" strokeWidth="1.500" />
      </>
    ),
  },
  {
    label: '广联达',
    run: true,
    art: (
      <>
        <path d="M20 5C12 0 3 5 3 12s6 11 12 9c5-1.500 6-6 6-9h-8" fill="none" stroke="#2f9fd6" strokeWidth="4" />
        <path d="M1 5 5 5 17 18l-5 6L3 13Z" fill="#e0343c" />
      </>
    ),
  },
  {
    label: '浏览器',
    run: true,
    art: (
      <>
        <circle cx="12" cy="12" r="11" fill="#44b53a" />
        <path d="M6 12.500h12c0-7-11-7-12 0s8 7 11 3" fill="none" stroke="#fff" strokeWidth="2.600" />
      </>
    ),
  },
  {
    label: '云盘',
    run: true,
    art: (
      <>
        <rect width="24" height="24" rx="4" fill="#1a8ff0" />
        <path d="M16 4.500c-3-1-4.500 0-4.500 3V17c0 2-1 3-3 3M4.500 12h15M4.500 12c0 3 1.500 4.500 4 4.500M19.500 12c0 3-1.500 4.500-4 4.500" fill="none" stroke="#fff" strokeWidth="2" />
      </>
    ),
  },
  { label: '计价软件', run: true, active: true, art: <g transform="scale(1.5)">{app}</g> },
]

function Taskbar() {
  return (
    <footer className="flex h-10 shrink-0 items-stretch bg-[#041012] font-['Noto_Sans','Noto_Sans_CJK_SC',sans-serif] text-white">
      <button aria-label="开始" className="flex w-12 items-center justify-center bg-black">
        <svg viewBox="0 0 16 16" className="size-4"><path d="M0 2.300 6.500 1.400V7.500H0ZM7.500 1.200 16 0v7.500H7.500ZM0 8.500h6.500v6.100L0 13.700ZM7.500 8.500H16V16l-8.500-1.200Z" fill="#fff" /></svg>
      </button>
      <label className="flex w-[343px] items-center bg-[#333] px-[9px]">
        <svg viewBox="0 0 22 22" className="size-[22px] shrink-0"><circle cx="11" cy="11" r="9" fill="none" stroke="#eee" strokeWidth="2.800" /></svg>
        <input aria-label="搜索" placeholder="在这里输入你要搜索的内容" className="ml-[5px] min-w-0 flex-1 text-sm placeholder:text-[#9a9a9a]" />
        <Mic className="mr-[2px] size-4 text-[#bbb]" strokeWidth={1.5} />
      </label>
      <div className="ml-[4px] flex">
        {tasks.map((t) => (
          <button key={t.label} aria-label={t.label} className={`mr-px flex w-12 flex-col items-center ${t.active ? 'bg-[#3a4446]' : ''}`}>
            <svg viewBox="0 0 24 24" className="mt-[8px] size-6">{t.art}</svg>
            {t.run && <span className={`mt-auto h-[2px] bg-[#76b9ed] ${t.active ? 'w-full' : 'w-10'}`} />}
          </button>
        ))}
      </div>
      <div className="ml-auto flex items-center text-center text-xs leading-[18px]">
        <div className="mr-4">26%<br />CPU使用</div>
        <ChevronUp className="mr-[9px] size-[18px]" strokeWidth={1.5} />
        <svg viewBox="0 0 18 14" className="mr-[9px] h-[14px] w-[18px]"><path d="M5 5.500h11v6H5ZM16.500 7v3M1 1v3h4V1M3 4v6h2" fill="none" stroke="#fff" /><path d="M7 7.500h6v2H7Z" fill="#fff" /></svg>
        <svg viewBox="0 0 14 14" className="mr-[7px] size-[14px]"><path d="M1 13C1 6 6 1 13 1M4.500 13c0-5 3.500-8.500 8.500-8.500M8 13c0-3 2-5 5-5M11 13c0-1 1-2 2-2" fill="none" stroke="#ccc" /></svg>
        <svg viewBox="0 0 18 14" className="mr-[8px] h-[14px] w-[18px]"><path d="M1 5h2.500L7 1.500v11L3.500 9H1ZM9.500 5q1.500 2 0 4M12 3q3 4 0 8M14.500 1.500q4 5.500 0 11" fill="none" stroke="#fff" /></svg>
        <span className="mr-[13px] text-sm">中</span>
        <SogouS className="mr-[17px] h-[16px] w-[17px]" />
        <div className="w-[60px]">10:14<br />2017/7/31</div>
        <div className="ml-[19px] flex h-10 w-[41px] items-center bg-black">
          <svg viewBox="0 0 26 26" className="size-[26px]">
            <path d="M1 3h15v12H8l-3 3v-3H1Z" fill="#fff" />
            <path d="M3.500 6.500h10M3.500 9h10M3.500 11.500h7" stroke="#000" />
            <circle cx="16" cy="17" r="7" fill="#555" stroke="#999" />
            <text x="16" y="21" textAnchor="middle" fontSize="11" fill="#fff">2</text>
          </svg>
        </div>
      </div>
    </footer>
  )
}

// red pen marks drawn over the grids
function Marks() {
  return (
    <svg viewBox="0 0 480 280" className="pointer-events-none absolute top-[215px] left-[225px] z-10 h-[280px] w-[480px]">
      <g fill="none" stroke="#ff0000" strokeWidth="3">
        <ellipse cx="162.500" cy="25.500" rx="157" ry="19" />
        <ellipse cx="385" cy="151" rx="82.500" ry="11" />
        <path d="M318 267 384 178" />
      </g>
      <path d="M389 170l-1 14-9-6Z" fill="#ff0000" stroke="#ff0000" strokeWidth="1" />
    </svg>
  )
}

export default function App() {
  return (
    <div className="relative flex h-screen min-h-[600px] flex-col overflow-hidden bg-[#f0f0f0] font-['Noto_Sans_CJK_SC',sans-serif] text-xs leading-4 text-black">
      <TitleBar />
      <MenuBar />
      <MainToolbar />
      <main className="flex min-h-0 flex-1">
        <SideTabs />
        <TreePanel />
        <div className="flex w-[7px] shrink-0 items-center justify-center">
          <span className="h-[100px] w-[5px] border border-[#808080] bg-[#f8f8f8]" />
        </div>
        <div className="flex min-w-0 flex-1 flex-col pb-[3px]">
          <div className="shrink-0 pb-px"><EditToolbar /></div>
          <BillGrid />
          <div className="flex h-[8px] shrink-0 items-center justify-center">
            <span className="h-[5px] w-[100px] border border-[#808080] bg-[#f8f8f8]" />
          </div>
          <div className="flex h-[22px] shrink-0 items-center pl-[2px] whitespace-nowrap">
            <button className="mr-[4px] h-5 w-[71px] border-t-2 border-l-2 border-[#777] bg-[#fafafa]">工料机显示</button>
            <span className="h-5 w-[2px] border-l border-[#a0a0a0] bg-white" />
            {detailTabs.map((t) => (
              <button key={t} className="h-5 border-r border-[#a0a0a0] pr-[11px] pl-[10px]">{t}</button>
            ))}
          </div>
          <div className="flex min-h-0 flex-1">
            <ResourceGrid />
            <SidePanel />
          </div>
        </div>
      </main>
      <StatusBar />
      <Taskbar />
      <Marks />
    </div>
  )
}
